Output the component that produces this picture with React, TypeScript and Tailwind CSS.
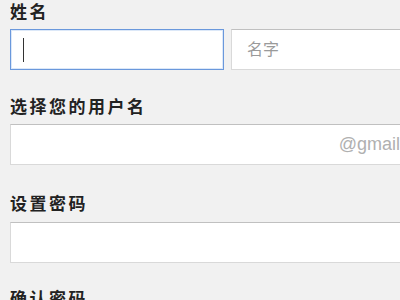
export default function App() {
  const label =
    "text-[17px] font-bold leading-[20px] tracking-[2.5px] text-[#222] font-['Liberation_Sans','Noto_Sans_CJK_SC',sans-serif]";
  const box = "h-[41px] bg-white border border-[#d9d9d9] border-t-[#c0c0c0]";
  return (
    <div className="w-[400px] h-[300px] overflow-hidden bg-[#f1f1f1] pl-[10px] pt-[3px] font-['Liberation_Sans','Noto_Sans_CJK_SC',sans-serif]">
      <div className={label}>姓名</div>
      <div className="mt-[6px] flex gap-[7px] w-[460px]">
        <div className="h-[41px] w-[214px] bg-white border border-[#6a98dc] shadow-[inset_0_0_0_1px_#dce8f8] flex items-center pl-[12px]">
          <span className="w-px h-[24px] bg-[#333]" />
        </div>
        <div className={`${box} flex-1 flex items-center pl-[15px] text-[16px] text-[#9a9a9a]`}>名字</div>
      </div>

      <div className={`${label} mt-[28px]`}>选择您的用户名</div>
      <div className={`${box} mt-[6px] w-[437px] flex items-center justify-end pr-[7px] text-[18px] text-[#b0b0b0]`}>
        @gmail.com
      </div>

      <div className={`${label} mt-[30px]`}>设置密码</div>
      <div className={`${box} mt-[7px] w-[437px]`} />

      <div className={`${label} mt-[27px]`}>确认密码</div>
    </div>
  );
}
